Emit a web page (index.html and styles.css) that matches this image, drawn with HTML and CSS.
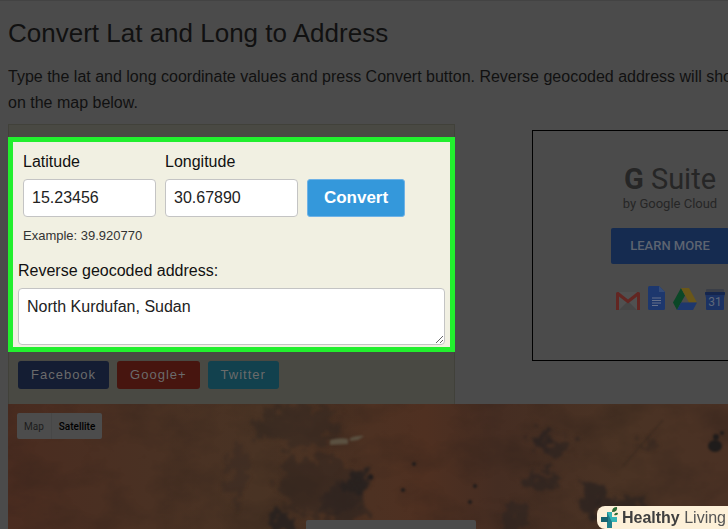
FILE: index.html
```html
<!DOCTYPE html>
<html lang="en">
<head>
<meta charset="UTF-8" />
<meta name="viewport" content="width=device-width, initial-scale=1" />
<title>Convert Lat and Long to Address</title>
<link rel="stylesheet" href="styles.css">
</head>
<body>

<main class="page">
  <h1>Convert Lat and Long to Address</h1>
  <p class="intro">Type the lat and long coordinate values and press Convert button. Reverse geocoded address will show<br>on the map below.</p>

  <div class="columns">
    <section class="panel">
      <form class="converter">
        <div class="fields">
          <div class="field">
            <label for="latitude">Latitude</label>
            <input type="text" id="latitude" value="15.23456">
          </div>
          <div class="field">
            <label for="longitude">Longitude</label>
            <input type="text" id="longitude" value="30.67890">
          </div>
          <button type="button" class="convert">Convert</button>
        </div>
        <p class="example">Example: 39.920770</p>
        <label for="address">Reverse geocoded address:</label>
        <textarea id="address">North Kurdufan, Sudan</textarea>
      </form>
      <div class="share">
        <a href="#" class="facebook">Facebook</a>
        <a href="#" class="google">Google+</a>
        <a href="#" class="twitter">Twitter</a>
      </div>
    </section>

    <aside class="ad">
      <div class="ad-title"><b>G</b> Suite</div>
      <div class="ad-sub">by Google Cloud</div>
      <a href="#" class="learn">LEARN MORE</a>
      <div class="apps">
        <!-- mail -->
        <svg width="24" height="18" viewBox="0 0 24 18">
          <rect x="1" width="22" height="18" rx="1" fill="#505050"/>
          <path d="M3 18 12 9l9 9z" fill="#464646"/>
          <path d="M0 18V1.500Q0 0 1.500 0H2.500L12 7.500 21.500 0H22.500Q24 0 24 1.500V18H21V4.500L12 11.500 3 4.500V18z" fill="#622622"/>
        </svg>
        <!-- docs -->
        <svg width="17" height="24" viewBox="0 0 17 24">
          <path d="M1.500 0H11l6 6v16.500q0 1.500-1.500 1.500h-14Q0 24 0 22.500v-21Q0 0 1.500 0z" fill="#1d376d"/>
          <path d="M11 0l6 6h-6z" fill="#344b77"/>
          <path d="M4 12h9M4 14.500h9M4 17h9M4 19.500h6" stroke="#66718a" stroke-width="1.200"/>
        </svg>
        <!-- drive -->
        <svg width="24" height="22" viewBox="0 0 24 22">
          <path d="M8 0 0 14.500 4 22 12 7.500z" fill="#0b4727"/>
          <path d="M8 0h8l8 14.500h-8z" fill="#6a5719"/>
          <path d="M8 14.500h16L20 22H4z" fill="#1d376d"/>
        </svg>
        <!-- calendar -->
        <svg width="20" height="21" viewBox="0 0 20 21">
          <rect x="1" y="0" width="18" height="5" rx="1" fill="#3a3e47"/>
          <path d="M0 4q0-1 1-1h18q1 0 1 1l-1 5v11q0 1-1 1H2q-1 0-1-1V9z" fill="#1b3263"/>
          <path d="M0 4q0-1 1-1h18q1 0 1 1l-.5 2h-19z" fill="#15264d"/>
          <text x="10" y="17" text-anchor="middle" class="day">31</text>
        </svg>
      </div>
    </aside>
  </div>

  <section class="map">
    <svg class="terrain" viewBox="0 0 720 125" preserveAspectRatio="xMidYMid slice" color-interpolation-filters="sRGB">
      <defs>
        <linearGradient id="sand">
          <stop offset="0" stop-color="#4a2c20"/>
          <stop offset=".2" stop-color="#4a3123"/>
          <stop offset=".35" stop-color="#493324"/>
          <stop offset=".58" stop-color="#4f3021"/>
          <stop offset=".68" stop-color="#452d22"/>
          <stop offset=".85" stop-color="#4a3324"/>
          <stop offset="1" stop-color="#4a3124"/>
        </linearGradient>
        <filter id="rough" x="-30%" y="-30%" width="160%" height="160%">
          <feTurbulence type="fractalNoise" baseFrequency=".09" numOctaves="4" seed="4" result="noise"/>
          <feDisplacementMap in="SourceGraphic" in2="noise" scale="34" xChannelSelector="R" yChannelSelector="G"/>
          <feGaussianBlur stdDeviation="1.500"/>
        </filter>
        <filter id="grain" x="0" y="0" width="100%" height="100%">
          <feTurbulence type="fractalNoise" baseFrequency=".02 .03" numOctaves="5" seed="9"/>
          <feColorMatrix values="0 0 0 0 .15  0 0 0 0 .11  0 0 0 0 .09  0 2 0 0 -.800"/>
        </filter>
        <filter id="soft"><feGaussianBlur stdDeviation="1"/></filter>
      </defs>
      <rect width="720" height="125" fill="url(#sand)"/>
      <rect width="720" height="125" filter="url(#grain)" opacity=".3"/>
      <g fill="#28211f" filter="url(#rough)">
        <ellipse cx="290" cy="22" rx="44" ry="20" opacity=".35"/>
        <ellipse cx="312" cy="82" rx="45" ry="30" opacity=".4"/>
        <ellipse cx="338" cy="100" rx="20" ry="24" opacity=".5"/>
        <ellipse cx="350" cy="78" rx="12" ry="12" opacity=".9"/>
        <ellipse cx="272" cy="118" rx="12" ry="12" opacity=".9"/>
        <ellipse cx="230" cy="72" rx="9" ry="32" opacity=".25"/>
        <ellipse cx="532" cy="34" rx="9" ry="9" opacity=".8"/>
        <ellipse cx="550" cy="42" rx="12" ry="7" opacity=".6"/>
        <ellipse cx="534" cy="77" rx="16" ry="9" opacity=".6"/>
        <ellipse cx="585" cy="95" rx="14" ry="14" opacity=".7"/>
        <ellipse cx="612" cy="103" rx="24" ry="12" opacity=".6"/>
        <ellipse cx="640" cy="40" rx="12" ry="4" opacity=".4"/>
        <ellipse cx="505" cy="116" rx="12" ry="18" opacity=".5"/>
      </g>
      <g fill="#1f1c1b" filter="url(#soft)">
        <circle cx="406" cy="60" r="2"/>
        <circle cx="395" cy="86" r="2"/>
        <circle cx="363" cy="73" r="2"/>
        <circle cx="462" cy="98" r="2"/>
        <circle cx="467" cy="82" r="2"/>
        <ellipse cx="707" cy="42" rx="7" ry="6"/>
        <circle cx="708" cy="33" r="3"/>
        <circle cx="714" cy="29" r="2"/>
        <path d="M655 16 615 62" stroke="#35271f"/>
      </g>
      <path d="M322 36q10-3 18-1v5l-18 1zM342 34q8-3 14-2l-6 4-8 1z" fill="#5b5141" filter="url(#soft)"/>
    </svg>
    <div class="map-type">
      <button type="button">Map</button>
      <button type="button" class="active">Satellite</button>
    </div>
    <div class="info-window"></div>
  </section>
</main>

<div class="badge">
  <svg width="20" height="22" viewBox="0 0 20 22">
    <path d="M7 5h5v16H7z" fill="#1f7f8a"/>
    <path d="M1 10h7v5H1z" fill="#17626f"/>
    <path d="M7 5h5v5h5v5h-5z" fill="#35b4b6"/>
    <path d="M12 5q0-5 5-5 1 5-5 5zM14 8q1-3 4-2 0 3-4 2z" fill="#2c6a35"/>
  </svg>
  <span><b>Healthy</b> Living</span>
</div>

</body>
</html>
```
FILE: styles.css
```css
* {
  box-sizing: border-box;
}
body {
  margin: 0;
  background: #4b4b4b;
  color: #111;
  font-family: "Liberation Sans", Arial, sans-serif;
  font-size: 16px;
  line-height: 20px;
  overflow: hidden;
}
a {
  text-decoration: none;
}

.page {
  display: flex;
  flex-direction: column;
  height: 100vh;
  padding: 17px 0 0 8px;
  border-top: 1px solid #434343;
}
h1 {
  margin: 0 0 16px;
  font-size: 26px;
  font-weight: normal;
  line-height: 30px;
}
.intro {
  margin: 0 0 8px;
  line-height: 26px;
  white-space: nowrap;
}
.columns {
  display: flex;
  align-items: flex-start;
  gap: 77px;
}

/* converter panel */
.panel {
  flex: none;
  padding-top: 12px;
  background: #494943;
  border: 1px solid #41413a;
  border-bottom: none;
}
.converter {
  display: flex;
  flex-direction: column;
  margin: 0 -1px;
  padding: 10px 5px 2px;
  background: #f1f0e2;
  border: 5px solid #22ef2e;
}
.converter label {
  display: block;
  margin-bottom: 7px;
}
.fields {
  display: flex;
  align-items: flex-end;
  gap: 9px;
  padding: 0 40px 0 5px;
}
.field input,
.converter textarea {
  display: block;
  background: #fff;
  border: 1px solid #c4c4c4;
  border-radius: 4px;
  color: #222;
  font: inherit;
}
.field input {
  width: 133px;
  height: 38px;
  padding: 0 8px;
}
.converter textarea {
  height: 57px;
  padding: 8px;
}
.convert {
  width: 98px;
  height: 38px;
  padding: 0;
  background: #3498db;
  border: 1px solid #6fb2e6;
  border-radius: 3px;
  color: #fff;
  font: bold 17px "Liberation Sans", Arial, sans-serif;
}
.example {
  margin: 10px 5px 16px;
  font-size: 13px;
  line-height: 18px;
  color: #333;
}
.share {
  display: flex;
  gap: 8px;
  padding: 9px 9px 15px;
}
.share a {
  padding: 0 13px;
  border-radius: 3px;
  color: #6b6b6b;
  font-size: 13px;
  line-height: 28px;
  letter-spacing: 1px;
}
.share .facebook {
  background: #141d33;
}
.share .google {
  background: #47150f;
}
.share .twitter {
  background: #12414e;
}

/* ad */
.ad {
  display: flex;
  flex: none;
  flex-direction: column;
  align-items: center;
  width: 276px;
  margin-top: 6px;
  padding: 31px 0 50px;
  border: 1px solid #000;
  color: #262626;
  font-family: Roboto, sans-serif;
}
.ad-title {
  font-size: 29px;
  line-height: 34px;
}
.ad-title b {
  font-weight: 700;
}
.ad-sub {
  margin-bottom: 16px;
  font-size: 13px;
  line-height: 16px;
}
.learn {
  padding: 0 19px;
  background: #152b50;
  border-radius: 2px;
  color: #5d6470;
  font-size: 13px;
  font-weight: 500;
  line-height: 36px;
}
.apps {
  display: flex;
  align-items: flex-end;
  gap: 8px;
  margin-top: 22px;
}
.day {
  fill: #5f6879;
  font-size: 12px;
}

/* map */
.map {
  position: relative;
  flex: 1;
  min-height: 0;
  padding: 9px;
  background: #472e21;
}
.terrain {
  position: absolute;
  top: 0;
  left: 0;
  width: 100%;
  height: 100%;
}
.map-type {
  position: relative;
  display: inline-flex;
  background: #4c4c4c;
  border-radius: 2px;
}
.map-type button {
  height: 26px;
  padding: 0 7px;
  background: none;
  border: none;
  color: #1c1c1c;
  font: 10px Roboto, sans-serif;
}
.map-type .active {
  border-left: 1px solid #474747;
  color: #000;
  font-weight: 500;
}
.info-window {
  position: absolute;
  bottom: 0;
  left: 298px;
  width: 170px;
  height: 9px;
  background: #4b4b4b;
  border-radius: 2px 2px 0 0;
}

/* site badge in the corner */
.badge {
  position: fixed;
  right: 0;
  bottom: 0;
  display: flex;
  align-items: center;
  gap: 2px;
  padding: 0 2px 0 3px;
  background: #fdf0d8;
  border-radius: 8px 0 0 8px;
  color: #555;
  line-height: 23px;
}
.badge b {
  color: #3f3f3f;
}
```
